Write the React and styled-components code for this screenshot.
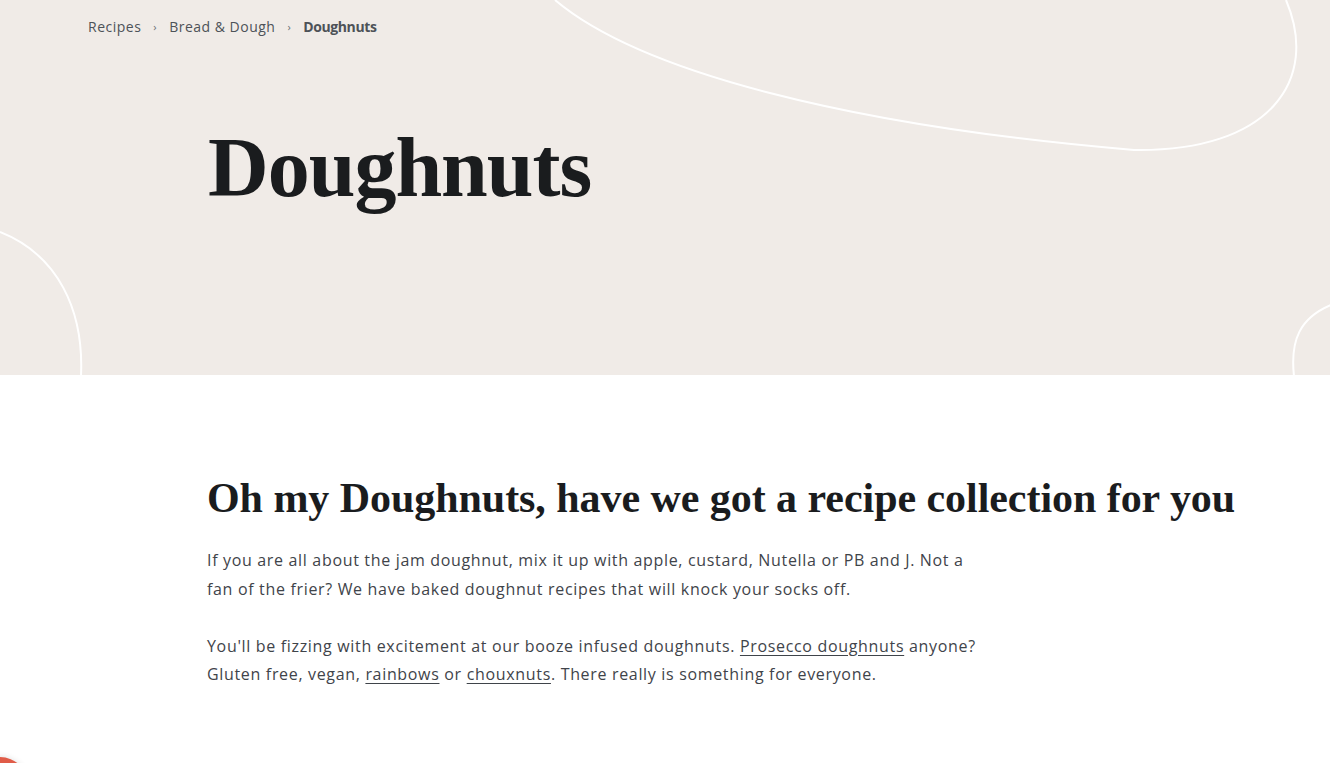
import React from 'react';
import styled, { createGlobalStyle } from 'styled-components';

const GlobalStyle = createGlobalStyle`
  html, body {
    margin: 0;
    padding: 0;
    background: #ffffff;
    overflow: hidden;
  }
`;

const Page = styled.div`
  width: 1330px;
  height: 763px;
  position: relative;
  overflow: hidden;
  font-family: 'Open Sans', 'Liberation Sans', sans-serif;
`;

const Hero = styled.header`
  position: relative;
  height: 375px;
  background: #f0ebe7;
  overflow: hidden;
  box-sizing: border-box;
  padding: 17px 0 0 88px;
`;

const Swirls = styled.svg`
  position: absolute;
  inset: 0;
  pointer-events: none;
`;

const Crumbs = styled.nav`
  position: relative;
  display: flex;
  align-items: center;
  gap: 12px;
  font-size: 14px;
  letter-spacing: 0.5px;
  color: #4d5258;
  line-height: 20px;
`;

const Crumb = styled.span`
  font-weight: ${p => (p.$current ? 700 : 400)};
  letter-spacing: ${p => (p.$current ? '-0.4px' : 'inherit')};
`;

const Sep = styled.span`
  font-size: 11px;
  color: #6a6f75;
`;

const Title = styled.h1`
  position: relative;
  margin: 89px 0 0 120px;
  font-family: 'Liberation Serif', serif;
  font-weight: 700;
  font-size: 84px;
  letter-spacing: -1px;
  line-height: 1;
  color: #1a1c1e;
`;

const Intro = styled.section`
  padding: 99px 0 0 207px;
`;

const Heading = styled.h2`
  margin: 0 0 24px;
  font-family: 'Liberation Serif', serif;
  font-weight: 700;
  font-size: 42px;
  letter-spacing: -0.05px;
  line-height: 48px;
  color: #1a1c1e;
  white-space: nowrap;
`;

const Para = styled.p`
  margin: 0 0 28.5px;
  max-width: 785px;
  font-size: 16px;
  letter-spacing: 0.67px;
  line-height: 28.5px;
  color: #3f444a;
`;

const TextLink = styled.a`
  color: inherit;
  text-decoration: underline;
  text-underline-offset: 3px;
`;

const Fab = styled.div`
  position: absolute;
  left: -28px;
  top: 757px;
  width: 56px;
  height: 56px;
  border-radius: 50%;
  background: #e05c48;
  box-shadow: 0 0 6px rgba(0, 0, 0, 0.12);
`;

export default function App() {
  return (
    <Page>
      <GlobalStyle />
      <Hero>
        <Swirls width="1330" height="375" viewBox="0 0 1330 375">
          <g fill="none" stroke="#ffffff" strokeWidth="2">
            <path d="M 555 0 C 640 72, 850 126, 1134 150 C 1270 152, 1320 80, 1286 0" />
            <path d="M 0 232 C 58 255, 84 310, 81 376" />
            <path d="M 1331 305 C 1300 318, 1290 340, 1294 376" />
          </g>
        </Swirls>
        <Crumbs>
          <Crumb>Recipes</Crumb>
          <Sep>›</Sep>
          <Crumb>Bread &amp; Dough</Crumb>
          <Sep>›</Sep>
          <Crumb $current>Doughnuts</Crumb>
        </Crumbs>
        <Title>Doughnuts</Title>
      </Hero>
      <Intro>
        <Heading>Oh my Doughnuts, have we got a recipe collection for you</Heading>
        <Para>
          If you are all about the jam doughnut, mix it up with apple, custard, Nutella or PB and J. Not a
          fan of the frier? We have baked doughnut recipes that will knock your socks off.
        </Para>
        <Para>
          You'll be fizzing with excitement at our booze infused doughnuts.{' '}
          <TextLink href="#">Prosecco doughnuts</TextLink> anyone? Gluten free, vegan,{' '}
          <TextLink href="#">rainbows</TextLink> or <TextLink href="#">chouxnuts</TextLink>. There really is
          something for everyone.
        </Para>
      </Intro>
      <Fab />
    </Page>
  );
}
